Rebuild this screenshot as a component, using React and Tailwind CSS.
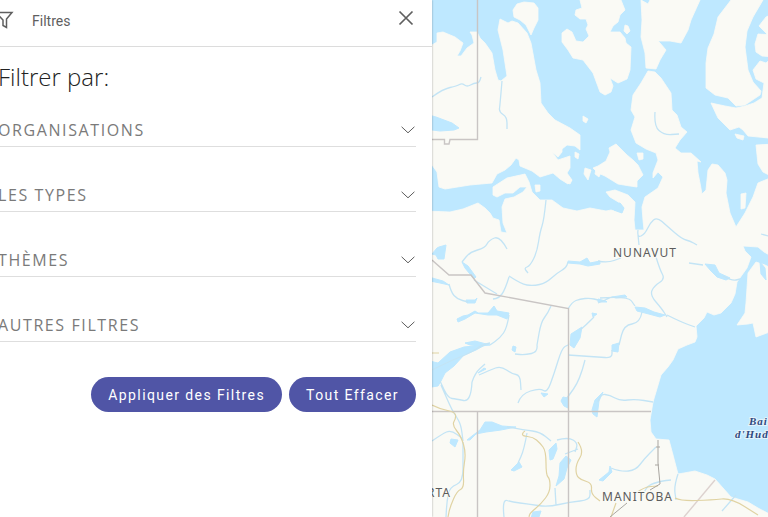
import React from "react";

const SECTIONS = ["Organisations", "Les types", "Thèmes", "Autres filtres"];

const LAND = [
  // Victoria Island
  "M425 45L432 45L437 42L437 33L443 32L455 37L463 43L460 51L457 56L461 56L464 52L467 48L474 43L472 35L470 32L477 32L480 38L485 43L492 53L495 70L498 80L501 81L507 76L503 50L498 30L500 19L508 23L512 21L518 23L527 33L531 43L536 70L540 83L541 103L548 113L555 120L570 128L580 135L580 150L575 146L567 145L562 149L562 152L558 157L552 152L558 160L570 156L570 168L567 173L572 180L568 184L560 179L553 173L540 177L532 171L520 166L519 160L516 158L511 165L505 170L497 174L492 183L470 185L445 189L439 187L437 172L432 165L425 165Z",
  "M513 10L517 4L524 2L534 3L538 8L538 20L534 28L531 35L526 25L520 20L514 17Z",
  // Prince of Wales Island
  "M580 0L582 8L576 10L575 15L580 19L586 19L588 25L586 29L589 36L583 42L576 41L572 32L567 29L562 33L562 42L568 50L573 58L583 60L593 73L600 92L605 95L611 92L613 86L610 78L618 83L627 79L630 70L631 47L626 43L625 38L620 32L610 32L613 26L618 22L620 15L625 10L621 0Z",
  // Somerset Island
  "M641 0L642 20L641 37L645 53L646 68L656 69L660 60L666 50L660 43L658 41L670 41L681 43L688 30L691 20L700 0L650 0L648 4Z",
  // Baffin Island
  "M731 0L718 17L714 34L708 48L706 63L706 88L715 95L728 98L736 106L745 105L751 101L760 95L761 91L753 82L748 70L745 47L747 31L753 17L763 0Z",
  "M711 103L725 106L736 108L745 106L754 103L762 98L764 83L756 79L753 70L760 61L766 63L775 55L775 137L768 138L748 136L743 130L739 127L730 130L718 118Z",
  "M775 13L766 17L759 26L770 37L775 36ZM775 35L758 34L755 44L756 52L762 56L775 57Z",
  "M756 145L775 144L775 178L763 172L758 164Z",
  // King William Island
  "M598 173L593 168L598 166L606 161L610 152L609 148L616 144L621 149L627 155L633 160L638 165L643 175L637 181L637 187L630 186L618 184L605 176Z",
  // mainland
  "M425 211L450 212L463 209L478 203L485 208L490 213L493 218L499 220L501 232L507 233L503 223L502 207L505 199L514 197L523 192L527 187L520 187L513 193L505 193L497 197L493 195L493 187L507 178L525 174L529 182L532 192L540 200L552 200L563 208L577 211L590 208L606 211L611 210L621 213L624 208L620 203L610 197L606 192L615 190L628 195L635 202L634 220L635 230L644 230L643 220L642 207L645 197L658 188L663 177L658 172L653 178L653 173L658 160L656 153L646 149L636 143L631 130L635 117L631 110L633 95L641 83L648 71L655 72L661 78L671 93L672 110L677 115L681 127L687 132L680 140L675 148L681 153L691 153L701 162L697 161L698 173L700 183L702 194L706 190L708 170L712 164L718 165L725 173L727 180L726 193L730 213L736 227L745 213L753 197L758 183L775 176L775 258L764 252L758 247L743 246L745 251L751 257L747 268L737 282L735 294L731 303L721 313L714 315L707 312L704 318L696 326L697 337L695 342L687 345L678 349L673 360L668 367L661 375L653 402L650 420L651 432L656 439L669 440L673 455L678 474L684 473L695 471L707 475L715 479L731 497L748 502L758 508L775 517L900 800L425 800Z",
  // Southampton Island
  "M756 262L748 273L746 303L745 313L737 325L748 324L753 323L756 337L775 330L775 270L765 265Z",
  // islets
  "M625 25L628 26L630 31L627 34L624 31ZM583 116L588 119L586 123L583 121ZM637 153L643 153L643 159L639 160ZM735 134L744 136L743 140L737 138ZM535 185L540 185L540 191L536 192ZM566 178L572 180L570 184L566 182ZM585 168L591 170L588 180L584 174ZM596 169L601 172L599 177L595 174ZM575 152L579 154L578 159L575 157ZM741 194L746 193L745 208L741 209Z",
];

const LAKES = [
  "M425 114L436 117L452 123L459 128L454 130L440 131L425 129Z",
  "M437 248L439 247L446 245L444 259L438 259L436 255L432 254Z",
  "M613 205L620 203L624 208L622 213L614 210Z",
  "M462 262L468 266L476 277L474 279L465 268Z",
  "M425 276L443 281L449 285L440 283L425 280ZM466 300L475 300L477 298L475 303L467 303Z",
  "M457 319L463 316L468 315L475 311L478 313L488 313L494 306L497 311L509 313L507 319L497 315L488 315L475 313L465 319L458 322Z",
  "M465 343L475 341L490 345L481 346L470 345Z",
  "M425 360L438 363L450 352L464 347L485 345L476 350L464 355L454 366L445 373L441 381L438 386L425 388Z",
  "M467 440L472 436L480 430L485 422L492 422L502 426L516 427L501 430L486 432L476 434L470 440Z",
  "M451 439L458 440L455 447L450 443ZM511 470L519 462L522 467L514 471ZM478 373L484 368L486 369Z",
  "M550 460L549 450L556 443L557 449L553 459ZM556 486L559 476L560 463L566 456L571 460L567 468L564 479Z",
  "M561 401L563 397L568 398L568 408L564 406ZM592 410L595 400L603 392L599 401L597 417L593 414ZM541 393L548 394L544 397Z",
  "M568 261L580 262L587 258L590 263L600 261L600 264L588 266L580 264L568 263ZM570 345L571 334L582 327L580 338L574 348Z",
  "M635 307L645 308L654 312L665 315L660 317L645 313L637 311ZM705 264L715 265L719 273L730 278L726 280L717 277L711 271ZM760 262L765 268L766 280L761 274Z",
  "M598 299L606 301L607 302L598 302ZM612 297L625 295L627 297L616 298ZM612 345L619 343L618 352L612 351ZM599 480L609 472L610 466L612 472L603 481ZM533 512L541 511L538 520L531 518ZM513 346L516 347L515 352L512 350ZM592 313L597 314L593 317Z",
];

const RIVERS = [
  "M432 97L443 89L457 86L462 83L467 87L474 83L479 83L481 77M502 81L500 105L499 112L507 117L507 129",
  "M507 249L500 236L489 240L485 248L470 252L462 262M546 200L544 220L540 232L537 252L530 266L524 268L528 273",
  "M509 277L505 290L499 298L493 299M509 276L521 284L533 286L546 283L557 273L566 268L568 262M474 280L487 288L497 294",
  "M449 284L451 292L457 299L468 302M509 315L507 328L500 338L490 345M551 306L548 313L541 322L537 345M568 309L572 302L580 299L590 298L598 300",
  "M432 370L450 361L470 353L482 345L490 343M479 375L490 370L501 366L512 374L520 375L521 390M472 382L475 373L485 364M472 382L471 402L456 399L448 398L440 381M518 403L521 394L540 388L547 393L554 374L562 348L568 345M568 355L598 357L612 358L612 350M585 360L580 380L567 398M441 385L444 392L452 410L456 416L461 425L463 441M432 441L442 434L451 430L463 439",
  "M463 442L463 455L463 482L450 487L447 500L446 517M507 427L525 430L540 432L551 441M527 433L524 450L518 463M557 440L568 437L578 443L575 452M565 454L578 449M504 517L502 499L512 502L528 504L548 507L570 502L590 500L590 490M555 488L556 505",
  "M537 345L538 352L525 355L515 354M638 230L637 238L645 234L650 223L657 217L667 226L682 239L690 241L697 245M638 235L639 245M598 261L607 263L621 258M656 257L660 270L665 279L654 286L650 295L662 309L667 317M600 298L628 296L635 306M598 303L612 297M594 317L586 325L580 330M642 312L640 323L624 325L619 345M667 315L681 322L695 327M689 263L703 265M723 276L732 281L740 279",
  "M598 402L600 394L610 395L620 401L635 399L653 402M611 468L621 472L636 470L644 459L656 447M671 480L650 482L642 496M678 474L674 486L676 500M655 112L654 126L664 135L679 134M761 234L768 236M736 495L722 511",
];

const ROADS = [
  "M432 405L440 409L455 412L456 418L452 425L461 436L466 453L463 471L464 488L457 491L450 507L448 517M432 353L439 353",
  "M525 431L523 432L522 436L533 437L540 443L546 451L546 475L550 479L550 492L541 504L530 513L529 517",
  "M578 442L584 451L576 464L576 475L581 480L592 483L591 494L600 501M636 493L644 487L658 486M611 517L616 503M675 498L681 501L712 500L731 498L758 515",
];

// Rounds each polyline by curving through the midpoints of its segments.
function smooth(d) {
  return d
    .split("M")
    .filter(Boolean)
    .map((line) => {
      const points = line.split("L").map((p) => p.trim().split(" ").map(Number));
      const last = points[points.length - 1];
      let out = `M${points[0]}`;
      for (let i = 1; i < points.length - 1; i++) {
        const [x, y] = points[i];
        const [nx, ny] = points[i + 1];
        out += `Q${x} ${y} ${(x + nx) / 2} ${(y + ny) / 2}`;
      }
      return `${out}L${last}`;
    })
    .join("");
}

function LineIcon({ d, className }) {
  return (
    <svg viewBox="0 0 20 20" className={className} fill="none" stroke="currentColor" aria-hidden="true">
      <path d={d} />
    </svg>
  );
}

function MapView() {
  return (
    <main className="min-w-0 flex-1 overflow-hidden bg-[#bee8ff]">
      <svg
        viewBox="432 0 336 517"
        preserveAspectRatio="xMinYMin slice"
        className="block h-screen w-full"
        role="img"
        aria-label="Carte"
      >
        <rect x="432" width="1600" height="1600" fill="#bee8ff" />
        <g fill="#fafaf5" stroke="#fafaf5" strokeWidth="0.8" strokeLinejoin="round">
          {LAND.map((d) => <path key={d} d={d} />)}
        </g>
        <g fill="#bee8ff" stroke="#bee8ff" strokeLinejoin="round">
          {LAKES.map((d) => <path key={d} d={d} />)}
        </g>
        <g fill="none" stroke="#c3e4f5" strokeWidth="1.3" strokeLinejoin="round">
          {RIVERS.map((d) => <path key={d} d={smooth(d)} />)}
        </g>
        <g fill="none" stroke="#c9c5c4" strokeWidth="1.4">
          <path d="M477.500 0V139.500H450L449 144H444.500V139.500H432" />
          <path d="M432 260L449 275H471L485 293L568.500 308.500V517M432 411.500H651M477.500 411.500V517" />
          <path d="M715 480L684 517" stroke="#ddd2cf" />
        </g>
        <g fill="none" stroke="#e0d3a3" strokeWidth="1.2" strokeLinejoin="round">
          {ROADS.map((d) => <path key={d} d={smooth(d)} />)}
        </g>
        <path d="M658 440V463L660 484L650 490M627 503L610 517M656 447H660M655 465H659" fill="none" stroke="#a9a6a1" />
        <g
          fontFamily="'Noto Sans', 'Open Sans', sans-serif"
          fontSize="12"
          letterSpacing="1"
          fill="#5c5c5c"
          stroke="#fafaf5"
          strokeWidth="2"
          paintOrder="stroke"
        >
          <text x="613" y="257">NUNAVUT</text>
          <text x="602" y="501">MANITOBA</text>
          <text x="451" y="497" textAnchor="end">ALBERTA</text>
        </g>
        <g
          fontFamily="'Liberation Serif', serif"
          fontSize="11"
          letterSpacing="1"
          fontStyle="italic"
          fontWeight="bold"
          fill="#30497e"
          stroke="#e4f4fc"
          strokeWidth="2"
          paintOrder="stroke"
        >
          <text x="749" y="425">Baie</text>
          <text x="735" y="438">d'Hudson</text>
        </g>
      </svg>
    </main>
  );
}

export default function App() {
  return (
    <div className="flex min-h-screen overflow-hidden bg-white font-['Open_Sans','Noto_Sans',sans-serif]">
      <aside className="z-10 w-[432px] shrink-0 overflow-hidden bg-white shadow-[0_0_2px_rgba(0,0,0,0.35)]">
        <header className="flex h-[47px] items-center border-b border-[#dcdcdc] pr-4 pb-1 text-[#5f5f5f]">
          <LineIcon
            className="-ml-1 size-5 shrink-0 stroke-[1.5]"
            d="M-1 1.500H16L10.500 8V16.500L7 14.500V9L0 1.500"
          />
          <h1 className="ml-4 flex-1 font-['Roboto',sans-serif] text-sm">Filtres</h1>
          <button type="button" aria-label="Fermer" className="-mt-1.5">
            <LineIcon className="size-5 stroke-[1.7]" d="M3.500 3.500L16.500 16.500M16.500 3.500L3.500 16.500" />
          </button>
        </header>
        <div className="-ml-0.5 pr-4">
          <h2 className="pt-3 text-2xl leading-9 font-light text-[#222]">Filtrer par:</h2>
          {SECTIONS.map((name) => (
            <button
              key={name}
              type="button"
              aria-expanded="false"
              className="mb-8 flex h-[33px] w-full items-center justify-between border-b border-[#dedede] text-left text-base tracking-widest text-[#7a7a7a] uppercase first-of-type:mt-[19px]"
            >
              {name}
              <LineIcon className="size-4 stroke-[1.2] text-[#555]" d="M2 6L10 13.500L18 6" />
            </button>
          ))}
          <div className="mt-1 flex justify-end gap-[7px] pt-[3px] font-['Roboto',sans-serif] text-sm tracking-widest text-white">
            <button type="button" className="h-[35px] rounded-full bg-[#5055a6] px-[17px]">Appliquer des Filtres</button>
            <button type="button" className="h-[35px] rounded-full bg-[#5055a6] px-[17px]">Tout Effacer</button>
          </div>
        </div>
      </aside>
      <MapView />
    </div>
  );
}
